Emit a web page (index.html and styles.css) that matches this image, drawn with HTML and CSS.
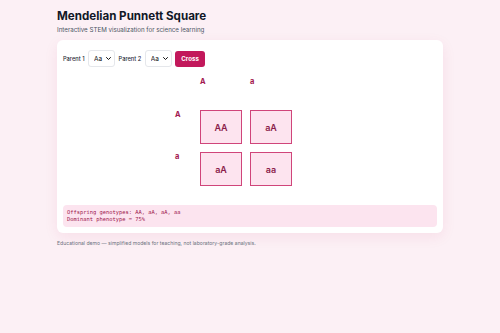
FILE: index.html
```html
<!DOCTYPE html>
<html lang="en">

<head>
  <meta charset="UTF-8">
  <meta name="viewport" content="width=device-width, initial-scale=1.0">
  <title>Mendelian Punnett Square</title>
  <link rel="stylesheet" href="styles.css">
</head>

<body>
  <div class="page">
    <h1 class="title">Mendelian Punnett Square</h1>
    <p class="subtitle">Interactive STEM visualization for science learning</p>

    <!-- main card -->
    <div class="card">
      <div class="controls">
        <label for="p1">Parent 1</label>
        <span class="select-wrap">
          <select id="p1">
            <option>AA</option>
            <option selected>Aa</option>
            <option>aa</option>
          </select>
          <svg class="chevron" viewBox="0 0 10 6" width="5" height="3"><path d="M1 1l4 4 4-4" fill="none" stroke="#111" stroke-width="2" stroke-linecap="round" stroke-linejoin="round"/></svg>
        </span>
        <label for="p2">Parent 2</label>
        <span class="select-wrap">
          <select id="p2">
            <option>AA</option>
            <option selected>Aa</option>
            <option>aa</option>
          </select>
          <svg class="chevron" viewBox="0 0 10 6" width="5" height="3"><path d="M1 1l4 4 4-4" fill="none" stroke="#111" stroke-width="2" stroke-linecap="round" stroke-linejoin="round"/></svg>
        </span>
        <button class="cross-btn" onclick="cross()">Cross</button>
      </div>

      <div class="punnett" id="punnett">
        <div class="head"></div>
        <div class="head">A</div>
        <div class="head">a</div>
        <div class="head">A</div>
        <div class="cell">AA</div>
        <div class="cell">aA</div>
        <div class="head">a</div>
        <div class="cell">aA</div>
        <div class="cell">aa</div>
      </div>

      <div class="result" id="result">Offspring genotypes: AA, aA, aA, aa<br>Dominant phenotype = 75%</div>
    </div>

    <p class="note">Educational demo — simplified models for teaching, not laboratory-grade analysis.</p>
  </div>

  <script>
    // 杂交计算
    function cross() {
      var p1 = document.getElementById("p1").value;
      var p2 = document.getElementById("p2").value;
      var grid = document.getElementById("punnett");
      var html = '<div class="head"></div>';
      var i, j;
      for (i = 0; i < 2; i++) {
        html += '<div class="head">' + p2[i] + '</div>';
      }
      var list = [];
      var dominant = 0;
      for (i = 0; i < 2; i++) {
        html += '<div class="head">' + p1[i] + '</div>';
        for (j = 0; j < 2; j++) {
          var g = p2[j] + p1[i];
          list.push(g);
          if (g.indexOf("A") >= 0) dominant++;
          html += '<div class="cell">' + g + '</div>';
        }
      }
      grid.innerHTML = html;
      document.getElementById("result").innerHTML = "Offspring genotypes: " + list.join(", ") +
        "<br>Dominant phenotype = " + (dominant / 4 * 100) + "%";
    }
  </script>
</body>

</html>
```

FILE: styles.css
```css
body {
  font-family: Inter, "Noto Sans", sans-serif;
  margin: 0;
  background-color: #fcf0f5;
  color: #1e293b;
}

.page {
  width: 386px;
  margin: 0 auto;
  padding-top: 9px;
}

.title {
  font-size: 11.6px;
  font-weight: 700;
  margin: 0;
  line-height: 14px;
  color: #111827;
}

.subtitle {
  font-size: 6.2px;
  color: #4b5563;
  margin: 3px 0 6px 0;
  line-height: 8px;
}

.card {
  background-color: #fff;
  border-radius: 6px;
  padding: 10px 6px 6px 6px;
  box-shadow: 0 4px 14px rgba(190, 24, 93, 0.08);
}

/* 控制栏 */
.controls {
  display: flex;
  align-items: center;
  gap: 3.5px;
  font-size: 5.7px;
  font-weight: 500;
  color: #1f2937;
}

.select-wrap {
  position: relative;
  display: inline-block;
  height: 17px;
}

.select-wrap select {
  -webkit-appearance: none;
  appearance: none;
  width: 27px;
  height: 17px;
  font-size: 6.5px;
  font-family: inherit;
  border: 1px solid #e5e7eb;
  border-radius: 3px;
  background-color: #fff;
  padding: 0 0 0 5px;
  color: #111;
}

.chevron {
  position: absolute;
  right: 4px;
  top: 7px;
  pointer-events: none;
}

.cross-btn {
  height: 16px;
  padding: 0 6px;
  border: none;
  border-radius: 3px;
  background-color: #c2185b;
  color: #fff;
  font-family: inherit;
  font-size: 6.2px;
  font-weight: 700;
  cursor: pointer;
}

/* 棋盘格 */
.punnett {
  display: grid;
  grid-template-columns: 17px 42px 42px;
  grid-template-rows: 25px 34px 34px;
  gap: 8px;
  margin: 10px 0 0 112px;
}

.head {
  font-size: 7.5px;
  font-weight: 700;
  color: #a3174f;
  line-height: 10px;
}

.cell {
  display: flex;
  align-items: center;
  justify-content: center;
  border: 1px solid #d0457a;
  background-color: #fde4ef;
  font-size: 9px;
  font-weight: 600;
  color: #8b1d4b;
}

.result {
  margin-top: 19px;
  background-color: #fce4ef;
  border-radius: 4px;
  padding: 4px 4px;
  font-family: "DejaVu Sans Mono", monospace;
  font-size: 5.4px;
  line-height: 7px;
  color: #9d174d;
}

.note {
  font-size: 5.1px;
  color: #6b7280;
  margin: 7px 0;
}
```
